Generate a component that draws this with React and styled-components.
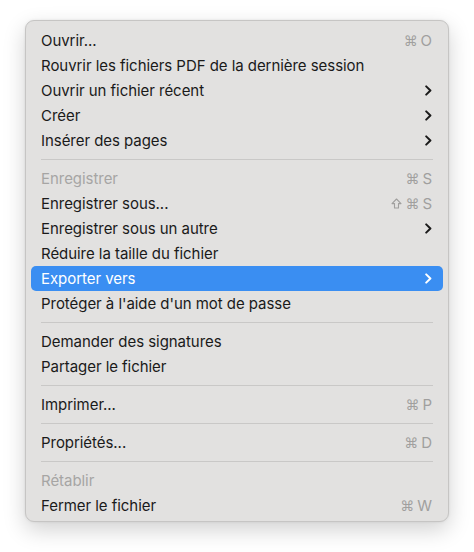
import React from 'react';
import styled, { createGlobalStyle } from 'styled-components';

const GlobalStyle = createGlobalStyle`
  body {
    margin: 0;
    background: #ffffff;
    font-family: 'Inter', 'Noto Sans', 'DejaVu Sans', sans-serif;
    -webkit-font-smoothing: antialiased;
  }
`;

const items = [
  { label: 'Ouvrir...', shortcut: '⌘O' },
  { label: 'Rouvrir les fichiers PDF de la dernière session' },
  { label: 'Ouvrir un fichier récent', submenu: true },
  { label: 'Créer', submenu: true },
  { label: 'Insérer des pages', submenu: true },
  { separator: true },
  { label: 'Enregistrer', shortcut: '⌘S', disabled: true },
  { label: 'Enregistrer sous...', shortcut: '⇧⌘S' },
  { label: 'Enregistrer sous un autre', submenu: true },
  { label: 'Réduire la taille du fichier' },
  { label: 'Exporter vers', submenu: true, active: true },
  { label: "Protéger à l'aide d'un mot de passe" },
  { separator: true },
  { label: 'Demander des signatures' },
  { label: 'Partager le fichier' },
  { separator: true },
  { label: 'Imprimer...', shortcut: '⌘P' },
  { separator: true },
  { label: 'Propriétés...', shortcut: '⌘D' },
  { separator: true },
  { label: 'Rétablir', disabled: true },
  { label: 'Fermer le fichier', shortcut: '⌘W' },
];

function Chevron({ color }) {
  return (
    <svg width='7' height='11' viewBox='0 0 7 11'>
      <polyline
        points='1.2,1.4 5.4,5.5 1.2,9.6'
        fill='none'
        stroke={color}
        strokeWidth='2'
        strokeLinecap='round'
        strokeLinejoin='round'
      />
    </svg>
  );
}

// outlined shift arrow
function ShiftIcon() {
  return (
    <svg width='11' height='11' viewBox='0 0 11 11'>
      <path
        d='M5.5 1 L10 5.6 H7.5 V10 H3.5 V5.6 H1 Z'
        fill='none'
        stroke='#a09f9e'
        strokeWidth='1.1'
        strokeLinejoin='round'
      />
    </svg>
  );
}

function Shortcut({ keys }) {
  return (
    <Keys>
      {keys.split('').map((k, i) =>
        k === '⇧' ? (
          <ShiftIcon key={i} />
        ) : (
          <span key={i} className={k === '⌘' ? 'sym' : 'key'}>
            {k}
          </span>
        )
      )}
    </Keys>
  );
}

export default function App() {
  return (
    <Page>
      <GlobalStyle />
      <Menu>
        {items.map((item, i) =>
          item.separator ? (
            <Separator key={i} />
          ) : (
            <Row key={i} $active={item.active} $disabled={item.disabled}>
              <Label>{item.label}</Label>
              {item.shortcut && <Shortcut keys={item.shortcut} />}
              {item.submenu && (
                <Chevron color={item.active ? '#ffffff' : '#1a1a1a'} />
              )}
            </Row>
          )
        )}
      </Menu>
    </Page>
  );
}

const Page = styled.div`
  width: 474px;
  height: 552px;
  padding: 20px 25px 30px;
  box-sizing: border-box;
`;

const Menu = styled.div`
  width: 424px;
  height: 502px;
  box-sizing: border-box;
  padding: 7px 5px 3px;
  background: #e2e1e0;
  border: 1px solid #c6c5c4;
  border-radius: 9px;
  box-shadow: 0 8px 22px rgba(0, 0, 0, 0.18), 0 0 3px rgba(0, 0, 0, 0.08);
  display: flex;
  flex-direction: column;
`;

const Row = styled.div`
  height: 25px;
  flex-shrink: 0;
  display: flex;
  align-items: center;
  padding: 0 11px 0 10px;
  border-radius: 5px;
  font-size: 15px;
  letter-spacing: -0.05px;
  color: ${(p) => (p.$active ? '#ffffff' : p.$disabled ? '#a6a5a4' : '#1a1a1a')};
  background: ${(p) => (p.$active ? '#3a8ef2' : 'transparent')};
`;

const Label = styled.span`
  flex: 1;
  white-space: nowrap;
`;

const Keys = styled.span`
  display: flex;
  align-items: center;
  gap: 3px;
  color: #a09f9e;
  font-size: 15px;

  .sym {
    font-family: 'DejaVu Sans', sans-serif;
    font-size: 14px;
  }
`;

const Separator = styled.div`
  height: 1px;
  flex-shrink: 0;
  background: #c9c8c7;
  margin: 6px 10px;
`;
